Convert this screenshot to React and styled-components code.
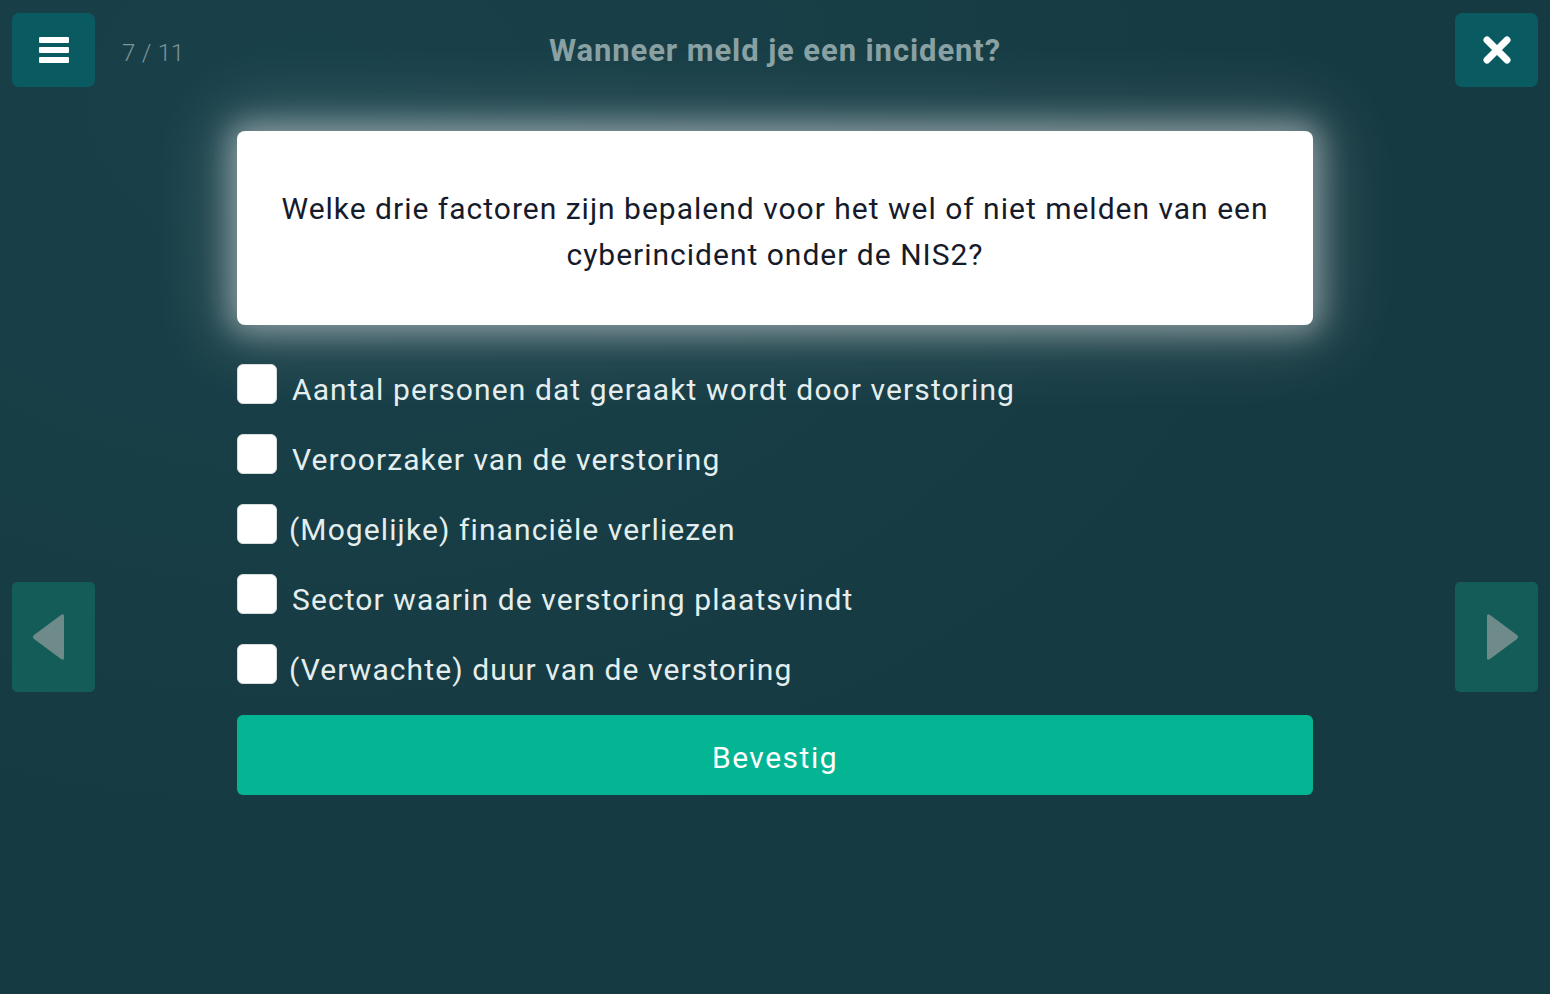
import React from "react";
import styled, { createGlobalStyle } from "styled-components";

const Global = createGlobalStyle`
  html, body { margin: 0; padding: 0; }
  body {
    background: #163a42;
    font-family: Roboto, "Noto Sans", "Liberation Sans", sans-serif;
  }
`;

const Page = styled.div`
  width: 1550px;
  height: 994px;
  overflow: hidden;
  background: radial-gradient(ellipse at 20% 10%, #19414a 0%, #163a42 60%);
  display: flex;
  flex-direction: column;
`;

const Header = styled.header`
  display: grid;
  grid-template-columns: 1fr auto 1fr;
  align-items: center;
  padding: 13px 12px 0 12px;
  height: 74px;
`;

const HeaderLeft = styled.div`
  display: flex;
  align-items: center;
  gap: 27px;
`;

const HeaderRight = styled.div`
  display: flex;
  justify-content: flex-end;
`;

const IconButton = styled.button`
  width: 83px;
  height: 74px;
  border: none;
  border-radius: 7px;
  background: #0a5b61;
  display: flex;
  align-items: center;
  justify-content: center;
  padding: 0;
  cursor: pointer;
`;

const Counter = styled.span`
  color: #7d9497;
  font-size: 24px;
  font-weight: 300;
  letter-spacing: -0.2px;
  word-spacing: 1px;
  margin-top: 6px;
`;

const Title = styled.h1`
  margin: 0;
  color: #8aa1a4;
  font-size: 31px;
  font-weight: 700;
  letter-spacing: 0.9px;
`;

const Body = styled.div`
  display: grid;
  grid-template-columns: 83px 1fr 83px;
  padding: 0 12px;
  flex: 1;
`;

const Side = styled.div`
  padding-top: 495px;
`;

const ArrowButton = styled.button`
  width: 83px;
  height: 110px;
  border: none;
  border-radius: 5px;
  background: #145c57;
  display: flex;
  align-items: center;
  justify-content: center;
  padding: 0;
`;

const Center = styled.main`
  display: flex;
  flex-direction: column;
  align-items: center;
  padding-top: 44px;
`;

const Column = styled.div`
  width: 1076px;
  display: flex;
  flex-direction: column;
`;

const QuestionCard = styled.div`
  background: #ffffff;
  border-radius: 8px;
  height: 194px;
  box-sizing: border-box;
  display: flex;
  align-items: center;
  justify-content: center;
  padding: 8px 30px 0 30px;
  box-shadow: 0 0 30px 8px rgba(255, 255, 255, 0.4),
    0 0 70px 20px rgba(255, 255, 255, 0.18);
`;

const QuestionText = styled.p`
  margin: 0;
  text-align: center;
  color: #161b2b;
  font-size: 30px;
  line-height: 46px;
  letter-spacing: 1px;
`;

const Options = styled.ul`
  list-style: none;
  margin: 39px 0 0 0;
  padding: 0;
  display: flex;
  flex-direction: column;
  gap: 30px;
`;

const Option = styled.li`
  display: flex;
  align-items: flex-start;
  gap: ${(p) => (p.$paren ? "12px" : "15px")};
  height: 40px;
`;

const Box = styled.span`
  width: 40px;
  height: 40px;
  flex: none;
  background: #ffffff;
  border-radius: 6px;
  box-sizing: border-box;
  border: 1px solid #d8dddd;
`;

const OptionLabel = styled.span`
  color: #e4eeee;
  font-size: 30px;
  line-height: 40px;
  margin-top: 6px;
  letter-spacing: 1.1px;
`;

const Confirm = styled.button`
  margin-top: 31px;
  height: 80px;
  border: none;
  border-radius: 6px;
  background: #04b593;
  color: #ffffff;
  font-family: Roboto, "Noto Sans", sans-serif;
  font-size: 30px;
  letter-spacing: 1.5px;
  padding: 4px 0 0 0;
`;

const Hamburger = () => (
  <svg width="30" height="28" viewBox="0 0 30 28">
    <rect x="0" y="1" width="30" height="6" rx="1" fill="#fff" />
    <rect x="0" y="11" width="30" height="6" rx="1" fill="#fff" />
    <rect x="0" y="21" width="30" height="6" rx="1" fill="#fff" />
  </svg>
);

const CloseIcon = () => (
  <svg width="28" height="28" viewBox="0 0 28 28">
    <path d="M4 4 L24 24 M24 4 L4 24" stroke="#fff" strokeWidth="7" strokeLinecap="round" />
  </svg>
);

const Triangle = ({ dir }) => (
  <svg width="36" height="48" viewBox="0 0 36 48" style={{ marginLeft: dir === "left" ? -10 : 10 }}>
    {dir === "left" ? (
      <path d="M33 3 L33 45 Q33 48 30 46 L3 26 Q1 24 3 22 L30 2 Q33 0 33 3 Z" fill="#6e8a89" />
    ) : (
      <path d="M3 3 L3 45 Q3 48 6 46 L33 26 Q35 24 33 22 L6 2 Q3 0 3 3 Z" fill="#6e8a89" />
    )}
  </svg>
);

const options = [
  "Aantal personen dat geraakt wordt door verstoring",
  "Veroorzaker van de verstoring",
  "(Mogelijke) financiële verliezen",
  "Sector waarin de verstoring plaatsvindt",
  "(Verwachte) duur van de verstoring",
];

export default function App() {
  return (
    <>
      <Global />
      <Page>
        <Header>
          <HeaderLeft>
            <IconButton aria-label="menu">
              <Hamburger />
            </IconButton>
            <Counter>7 / 11</Counter>
          </HeaderLeft>
          <Title>Wanneer meld je een incident?</Title>
          <HeaderRight>
            <IconButton aria-label="sluiten">
              <CloseIcon />
            </IconButton>
          </HeaderRight>
        </Header>
        <Body>
          <Side>
            <ArrowButton aria-label="vorige">
              <Triangle dir="left" />
            </ArrowButton>
          </Side>
          <Center>
            <Column>
              <QuestionCard>
                <QuestionText>
                  Welke drie factoren zijn bepalend voor het wel of niet melden van een
                  <br />
                  cyberincident onder de NIS2?
                </QuestionText>
              </QuestionCard>
              <Options>
                {options.map((o) => (
                  <Option key={o} $paren={o.startsWith("(")}>
                    <Box />
                    <OptionLabel>{o}</OptionLabel>
                  </Option>
                ))}
              </Options>
              <Confirm>Bevestig</Confirm>
            </Column>
          </Center>
          <Side>
            <ArrowButton aria-label="volgende">
              <Triangle dir="right" />
            </ArrowButton>
          </Side>
        </Body>
      </Page>
    </>
  );
}
